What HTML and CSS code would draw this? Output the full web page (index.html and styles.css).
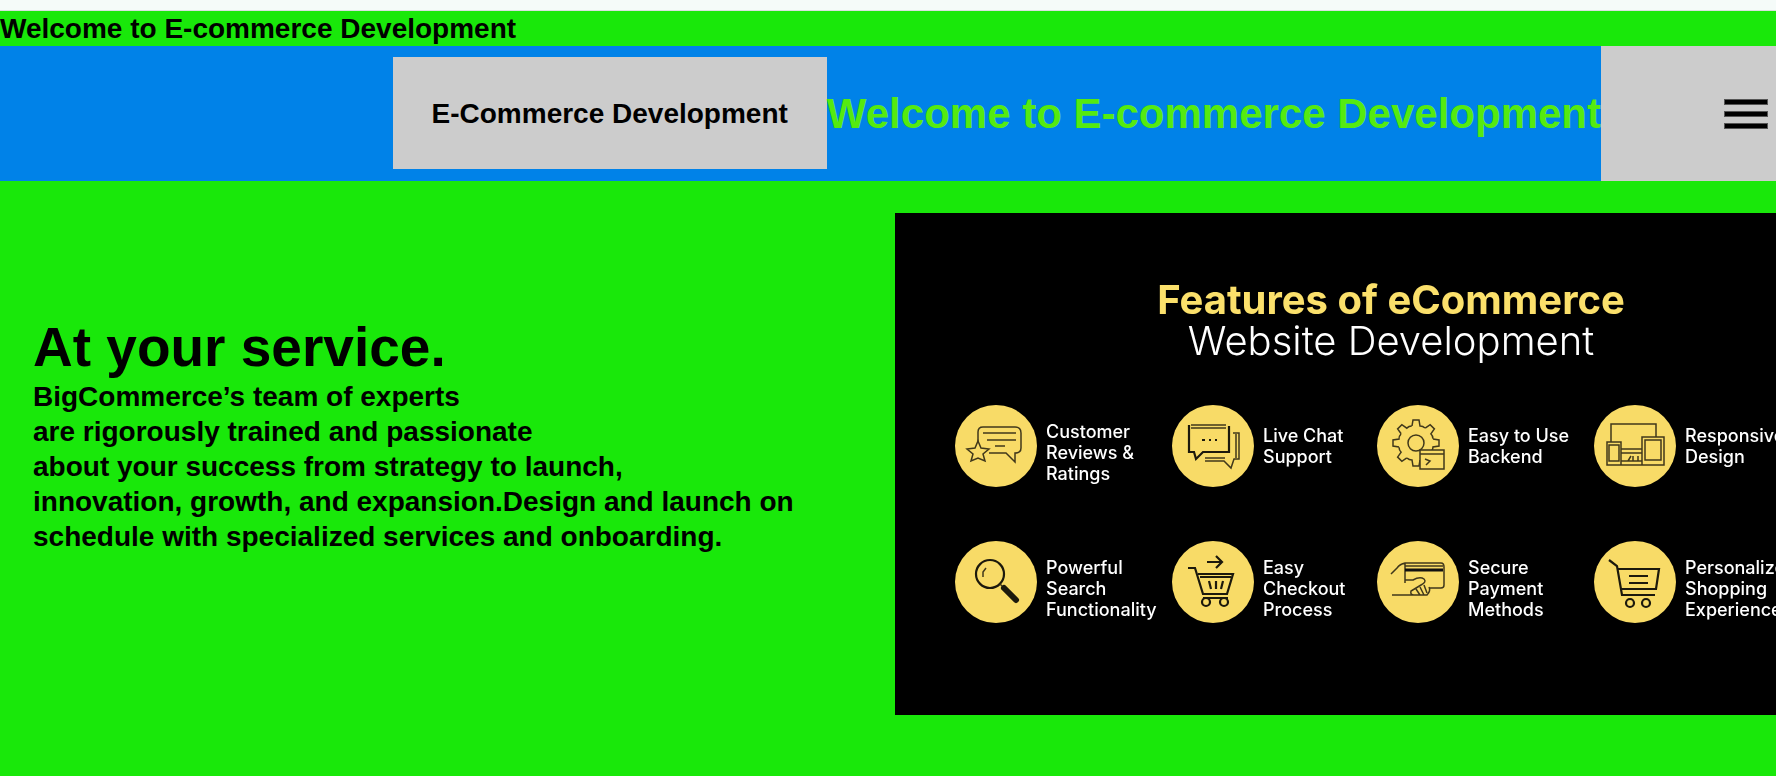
FILE: index.html
```html
<!DOCTYPE html>
<html lang="en">
<head>
<meta charset="utf-8">
<meta name="viewport" content="width=device-width, initial-scale=1">
<title>E-commerce Development</title>
<link rel="stylesheet" href="styles.css">
</head>
<body>
<div class="topline"></div>
<p class="welcome">Welcome to E-commerce Development</p>
<header class="navbar">
  <button class="brand" type="button">E-Commerce Development</button>
  <h1 class="title">Welcome to E-commerce Development</h1>
  <button class="menu" type="button" aria-label="Menu">
    <span class="bar"></span><span class="bar"></span><span class="bar"></span>
  </button>
</header>
<main class="hero">
  <section class="service">
    <h2 class="service-title">At your service.</h2>
    <p class="service-text">BigCommerce’s team of experts<br>are rigorously trained and passionate<br>about your success from strategy to launch,<br>innovation, growth, and expansion.Design and launch on<br>schedule with specialized services and onboarding.</p>
  </section>
  <section class="banner">
    <div class="banner-art">
      <h2 class="banner-title">Features of eCommerce</h2>
      <p class="banner-subtitle">Website Development</p>
      <ul class="features">
        <li class="feature tall">
          <svg class="icon" viewBox="0 0 82 82"><circle class="disc" cx="41" cy="41" r="41"/>
            <path d="M23 38V27Q23 22 28 22H60Q66 22 66 28V43Q66 48 60 48V57L51 48H34M28 28H61M32 35H61M40 41H50"/>
            <path class="cover" d="M23 36L26 43L34 44L28 49L30 56L23 53L16 56L18 49L12 44L20 43Z"/></svg>
          <span>Customer<br>Reviews &amp;<br>Ratings</span></li>
        <li class="feature">
          <svg class="icon" viewBox="0 0 82 82"><circle class="disc" cx="41" cy="41" r="41"/>
            <path d="M19 20H54M19 23H54M61 28H67V54H62L59 63L52 56H33M33 53H53M64 29V53"/>
            <path class="bold" d="M57 21V47H31L24 54L22 47H17V20"/>
            <path class="bold" d="M30 35H33M37 35H39M43 35H45"/></svg>
          <span>Live Chat<br>Support</span></li>
        <li class="feature">
          <svg class="icon" viewBox="0 0 82 82"><circle class="disc" cx="41" cy="41" r="41"/>
            <g transform="translate(39 38)">
              <path id="tooth" d="M-4 -17L-3 -23H3L4 -17Q7 -17 9 -15"/>
              <use href="#tooth" transform="rotate(45)"/><use href="#tooth" transform="rotate(90)"/><use href="#tooth" transform="rotate(135)"/><use href="#tooth" transform="rotate(180)"/><use href="#tooth" transform="rotate(225)"/><use href="#tooth" transform="rotate(270)"/><use href="#tooth" transform="rotate(315)"/>
              <circle r="8"/></g>
            <path class="cover" d="M43 45H67V64H43Z"/><path d="M43 49H67M48 54L53 56L49 60"/></svg>
          <span>Easy to Use<br>Backend</span></li>
        <li class="feature">
          <svg class="icon" viewBox="0 0 82 82"><circle class="disc" cx="41" cy="41" r="41"/>
            <path d="M17 37V19H62V32M13 37H27V60H13ZM15 40H25V56H15ZM48 32H70V60H48ZM51 35H67V55H51ZM27 44H48M27 48H48M27 56H48M27 60H48M34 56L37 51M39 56V51M44 56V51"/></svg>
          <span>Responsive<br>Design</span></li>
        <li class="feature tall">
          <svg class="icon" viewBox="0 0 82 82"><circle class="disc" cx="41" cy="41" r="41"/>
            <circle class="bold" cx="35" cy="33" r="14"/><path d="M28 36V31L31 27M45 43L49 47"/><path class="handle" d="M49 47L61 59"/></svg>
          <span>Powerful<br>Search<br>Functionality</span></li>
        <li class="feature tall">
          <svg class="icon" viewBox="0 0 82 82"><circle class="disc" cx="41" cy="41" r="41"/>
            <path class="bold" d="M35 21H50M44 15L50 21L44 27M16 27H23L31 53H55L61 33H26M28 36H59M31 57H56M37 40L39 48M44 40V48M51 40L49 48"/>
            <circle class="bold" cx="34" cy="61" r="4"/><circle class="bold" cx="52" cy="61" r="4"/></svg>
          <span>Easy<br>Checkout<br>Process</span></li>
        <li class="feature tall">
          <svg class="icon" viewBox="0 0 82 82"><circle class="disc" cx="41" cy="41" r="41"/>
            <path d="M14 33L20 27Q23 23 28 22H64Q67 22 67 26V44Q67 47 64 47H52M28 22V42M28 25H66M28 39H36Q43 35 47 38Q50 41 44 44L34 50Q33 54 37 54H50Q54 50 52 46M39 48L43 54M43 46L47 54M47 44L50 52M15 54H37"/><path class="stripe" d="M28 29H66"/></svg>
          <span>Secure<br>Payment<br>Methods</span></li>
        <li class="feature tall">
          <svg class="icon" viewBox="0 0 82 82"><circle class="disc" cx="41" cy="41" r="41"/>
            <path class="bold" d="M15 19L23 25L28 54H61M24 28H65L62 48H27M35 35H54M35 42H54"/>
            <circle class="bold" cx="36" cy="62" r="4"/><circle class="bold" cx="52" cy="62" r="4"/></svg>
          <span>Personalized<br>Shopping<br>Experience</span></li>
      </ul>
    </div>
  </section>
</main>
</body>
</html>
```

FILE: styles.css
```css
* { box-sizing: border-box; }

body {
  margin: 0;
  min-height: 100vh;
  display: flex;
  flex-direction: column;
  background: #19e80a;
  color: #000;
  font: bold 28px/35px "Liberation Sans", Arial, sans-serif;
  overflow-x: hidden;
}

h1, h2, p, ul { margin: 0; padding: 0; }

.topline {
  height: 11px;
  background: #f5fbf9;
  border-bottom: 1px solid #d9e0de;
}

.navbar {
  display: flex;
  align-items: center;
  justify-content: flex-end;
  background: #0082e8;
}

.brand {
  border: 0;
  padding: 39px 39px 38px;
  margin: 11px 0 12px;
  background: #ccc;
  color: #000;
  font: inherit;
  white-space: nowrap;
}

.title {
  color: #55ea10;
  font-size: 42px;
  line-height: 48px;
  white-space: nowrap;
}

.menu {
  align-self: stretch;
  display: flex;
  flex-direction: column;
  align-items: flex-end;
  justify-content: center;
  gap: 6px;
  width: 175px;
  padding: 0 8px 0 0;
  border: 0;
  background: #ccc;
}

.bar {
  width: 44px;
  height: 6px;
  background: #000;
  border: 1px solid #555;
}

.hero {
  flex: 1;
  display: grid;
  grid-template-columns: minmax(0, 1fr) minmax(0, 1fr);
  column-gap: 14px;
  align-items: start;
  padding: 32px 0 60px;
}

.service { padding: 102px 0 0 33px; }

.service-title {
  font-size: 55px;
  line-height: 64px;
}

.service-text { white-space: nowrap; }

.banner {
  overflow: hidden;
  background: #000;
  color: #fff;
  font-family: Inter, sans-serif;
}

.banner-art {
  min-width: 992px;
  padding: 66px 60px 92px;
  filter: blur(0.7px);
}

.banner-title, .banner-subtitle {
  font-size: 40px;
  line-height: 41px;
  text-align: center;
}

.banner-title { color: #fbe06b; }

.banner-subtitle { font-weight: 300; }

.features {
  list-style: none;
  display: grid;
  grid-template-columns: 217px 205px 217px 1fr;
  row-gap: 54px;
  margin-top: 44px;
}

.feature {
  display: flex;
  align-items: center;
  gap: 9px;
  height: 82px;
  font-size: 18px;
  font-weight: 500;
  line-height: 21px;
  white-space: nowrap;
}

.tall span { padding-top: 12px; }

.icon {
  flex: none;
  width: 82px;
  height: 82px;
  fill: none;
  stroke: #40381b;
  stroke-width: 1.5;
}

.disc { fill: #f8db67; stroke: none; }
.cover { fill: #f8db67; }
.bold { stroke: #1c190c; stroke-width: 2.2; }
.handle { stroke: #1c190c; stroke-width: 6; stroke-linecap: round; }
.stripe { stroke: #111; stroke-width: 3; }
```
